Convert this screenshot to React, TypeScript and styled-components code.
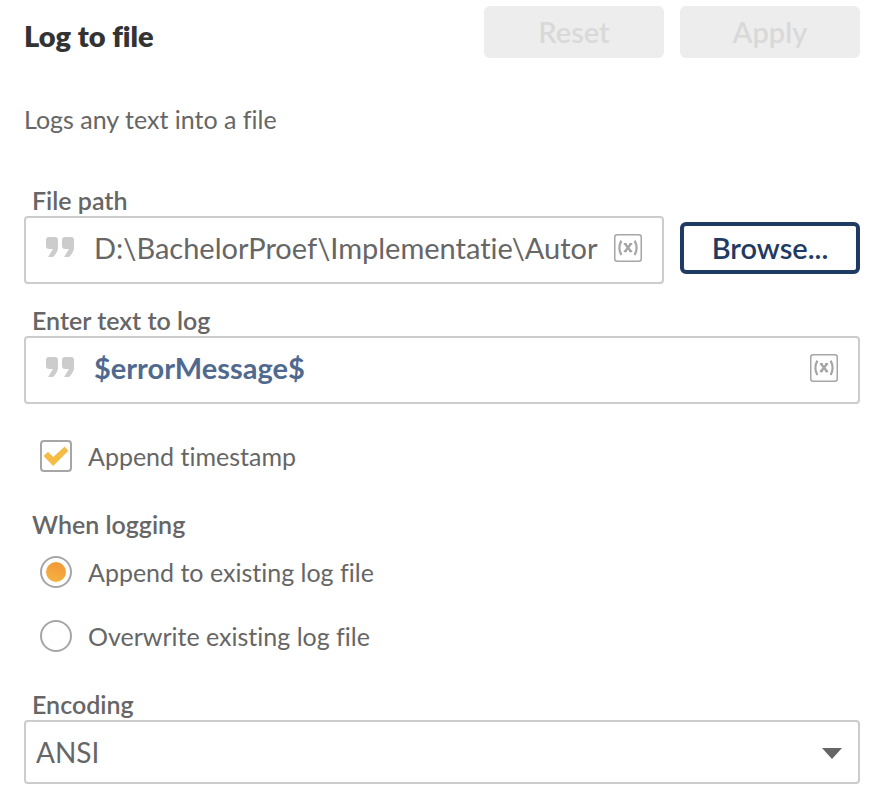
import React, { useState } from "react";
import styled, { createGlobalStyle } from "styled-components";

const color = {
  heading: "#333333",
  text: "#666666",
  border: "#cccccc",
  control: "#a6a6a6",
  navy: "#1f3b63",
  variable: "#50698f",
  amber: "#f5bc45",
};

const GlobalStyle = createGlobalStyle`
  *, *::before, *::after { box-sizing: border-box; }
  body {
    margin: 0;
    background: #ffffff;
    color: ${color.text};
    font-family: Lato, "Liberation Sans", sans-serif;
    font-size: 25px;
    font-variant-ligatures: none;
    line-height: 32px;
  }
  button, input, select { font: inherit; font-variant-ligatures: none; color: inherit; margin: 0; }
`;

const Panel = styled.form`
  display: flex;
  flex-direction: column;
  padding: 6px 30px 14px 24px;
`;

const Header = styled.header`
  display: flex;
  align-items: center;
  gap: 16px;
`;

const Title = styled.h1`
  flex: 1;
  margin: 0;
  padding-top: 8px;
  color: ${color.heading};
  font-size: 29px;
  font-weight: 800;
  line-height: 32px;
`;

const Button = styled.button<{ $outlined?: boolean }>`
  flex: none;
  width: 180px;
  height: 52px;
  padding: 0;
  border: ${(p) => (p.$outlined ? `4px solid ${color.navy}` : "0")};
  border-radius: 6px;
  background: ${(p) => (p.$outlined ? "#ffffff" : "#ededed")};
  color: ${(p) => (p.$outlined ? color.navy : "#d9d9d9")};
  font-size: 29px;
  font-weight: 600;
  line-height: 32px;
`;

const Description = styled.p`
  margin: 45px 0 49px;
`;

const Fields = styled.div`
  display: flex;
  flex-direction: column;
  gap: 20px;
`;

const Field = styled.div`
  display: flex;
  flex-direction: column;
`;

const Label = styled.label`
  padding-left: 8px;
  font-weight: 600;
`;

const Row = styled.div`
  display: flex;
  align-items: center;
  gap: 16px;
  > button { margin-bottom: 4px; }
`;

const InputBox = styled.div`
  flex: 1;
  min-width: 0;
  height: 68px;
  display: flex;
  align-items: center;
  padding: 0 20px 4px;
  border: 2px solid ${color.border};
  border-radius: 4px;
`;

const TextInput = styled.input<{ $variable?: boolean }>`
  flex: 1;
  min-width: 0;
  height: 40px;
  margin: 0 16px 0 18px;
  padding: 0 0 2px;
  border: 0;
  outline: 0;
  background: transparent;
  color: ${(p) => (p.$variable ? color.variable : color.text)};
  font-size: 29px;
  font-weight: ${(p) => (p.$variable ? 700 : 400)};
`;

const VariableButton = styled.button`
  flex: none;
  display: flex;
  padding: 0;
  border: 0;
  background: none;
`;

const Choice = styled.label`
  display: flex;
  align-items: center;
  gap: 16px;
  padding-left: 16px;
`;

const TickCell = styled.span`
  display: grid;
  > * { grid-area: 1 / 1; }
  svg { pointer-events: none; }
`;

const Tick = styled.input`
  appearance: none;
  width: 32px;
  height: 32px;
  border: 2px solid ${color.control};
  border-radius: 4px;
  background: #ffffff;
`;

const Radio = styled.input`
  appearance: none;
  display: grid;
  place-items: center;
  width: 32px;
  height: 32px;
  border: 2px solid ${color.control};
  border-radius: 50%;
  background: #ffffff;
  &:checked::before {
    content: "";
    width: 20px;
    height: 20px;
    border-radius: 50%;
    background: linear-gradient(20deg, #f5b540, #f19538);
  }
`;

const CheckSection = styled.div`
  padding: 36px 0;
`;

const Group = styled.fieldset`
  display: flex;
  flex-direction: column;
  gap: 32px;
  margin: 0 0 36px;
  padding: 0;
  border: 0;
`;

const Legend = styled.legend`
  margin-bottom: 16px;
  padding: 0 0 0 8px;
  font-weight: 600;
`;

const SelectBox = styled.div`
  display: grid;
  align-items: center;
  > * { grid-area: 1 / 1; }
  svg { justify-self: end; margin-right: 17px; pointer-events: none; }
`;

const Select = styled.select`
  appearance: none;
  width: 100%;
  height: 64px;
  padding: 0 48px 0 10px;
  border: 2px solid ${color.border};
  border-radius: 4px;
  background: #ffffff;
  font-size: 28px;
`;

const QuoteIcon = () => (
  <svg width="30" height="22" viewBox="0 0 30 22" fill="#cccccc" aria-hidden="true">
    <path d="M3 0H9Q12 0 12 3V11Q12 15 7 20H2L7 12H3Q0 12 0 9V3Q0 0 3 0Z" />
    <path d="M19 0H25Q28 0 28 3V11Q28 15 23 20H18L23 12H19Q16 12 16 9V3Q16 0 19 0Z" />
  </svg>
);

const VariableIcon = () => (
  <svg width="28" height="28" viewBox="0 0 28 28" fill="none" stroke={color.control} aria-hidden="true">
    <rect x="0.75" y="0.75" width="26.5" height="26.5" rx="2.5" strokeWidth="1.5" />
    <path d="M7.4 6.6Q3.4 13.8 7.4 21M20.6 6.6Q24.6 13.8 20.6 21" strokeWidth="2.2" />
    <path d="M10.8 9.6L17 17.6M17.2 9.6L11 17.6" strokeWidth="2.4" />
    <path d="M9.8 9.8H12.8M15.2 9.8H18.2M9.8 17.4H12.8M15.2 17.4H18.2" strokeWidth="1.6" />
  </svg>
);

const CheckIcon = () => (
  <svg width="32" height="32" viewBox="0 0 32 32" aria-hidden="true">
    <path
      d="M4.5 16L8 12.8L13.2 18L24.6 7.6L27.4 10.8L13.2 25Z"
      fill={color.amber}
      stroke={color.amber}
      strokeWidth="1.4"
      strokeLinejoin="round"
    />
  </svg>
);

const ArrowIcon = () => (
  <svg width="22" height="14" viewBox="0 0 22 14" aria-hidden="true">
    <path d="M1 3H21L11 14Z" fill={color.text} />
  </svg>
);

interface VariableFieldProps {
  id: string;
  label: string;
  initial: string;
  variable?: boolean;
  children?: React.ReactNode;
}

function VariableField({ id, label, initial, variable, children }: VariableFieldProps) {
  const [value, setValue] = useState(initial);
  return (
    <Field>
      <Label htmlFor={id}>{label}</Label>
      <Row>
        <InputBox>
          <QuoteIcon />
          <TextInput
            id={id}
            type="text"
            spellCheck={false}
            $variable={variable}
            value={value}
            onChange={(e) => setValue(e.target.value)}
          />
          <VariableButton type="button" aria-label="Insert variable">
            <VariableIcon />
          </VariableButton>
        </InputBox>
        {children}
      </Row>
    </Field>
  );
}

export default function App() {
  const [timestamp, setTimestamp] = useState(true);
  const [mode, setMode] = useState("append");
  const modes = [
    { value: "append", label: "Append to existing log file" },
    { value: "overwrite", label: "Overwrite existing log file" },
  ];

  return (
    <>
      <GlobalStyle />
      <Panel onSubmit={(e) => e.preventDefault()}>
        <Header>
          <Title>Log to file</Title>
          <Button type="reset" disabled>Reset</Button>
          <Button type="submit" disabled>Apply</Button>
        </Header>
        <Description>Logs any text into a file</Description>

        <Fields>
          <VariableField id="path" label="File path" initial={"D:\\BachelorProef\\Implementatie\\Autor"}>
            <Button type="button" $outlined>Browse...</Button>
          </VariableField>
          <VariableField id="message" label="Enter text to log" initial="$errorMessage$" variable />
        </Fields>

        <CheckSection>
          <Choice>
            <TickCell>
              <Tick type="checkbox" checked={timestamp} onChange={(e) => setTimestamp(e.target.checked)} />
              {timestamp && <CheckIcon />}
            </TickCell>
            Append timestamp
          </Choice>
        </CheckSection>

        <Group>
          <Legend>When logging</Legend>
          {modes.map((m) => (
            <Choice key={m.value}>
              <Radio type="radio" name="mode" checked={mode === m.value} onChange={() => setMode(m.value)} />
              {m.label}
            </Choice>
          ))}
        </Group>

        <Field>
          <Label htmlFor="encoding">Encoding</Label>
          <SelectBox>
            <Select id="encoding" defaultValue="ANSI">
              <option>ANSI</option>
              <option>UTF-8</option>
              <option>Unicode</option>
            </Select>
            <ArrowIcon />
          </SelectBox>
        </Field>
      </Panel>
    </>
  );
}
